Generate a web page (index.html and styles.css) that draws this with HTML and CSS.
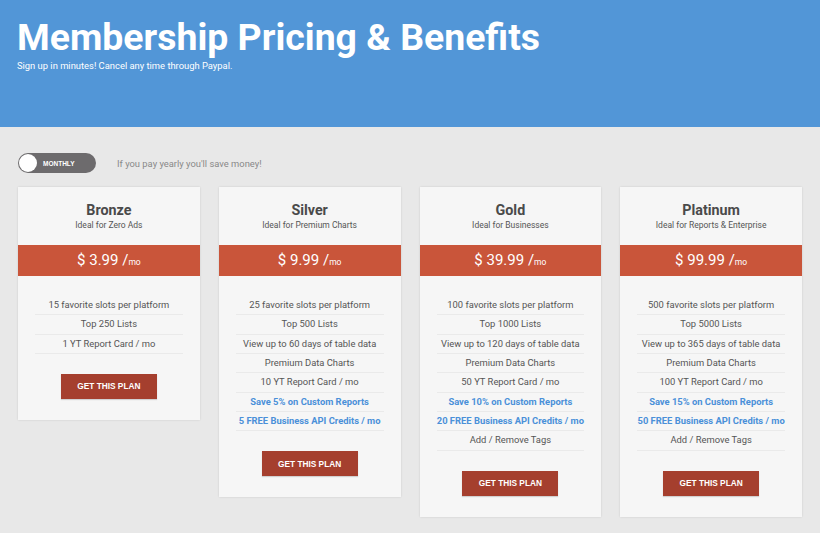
FILE: index.html
```html
<!DOCTYPE html>
<html>
<head>
<meta charset="utf-8">
<link rel="stylesheet" href="styles.css">
</head>
<body>
<header class="hero">
  <h1 class="hero-title">Membership Pricing &amp; Benefits</h1>
  <p class="hero-sub">Sign up in minutes! Cancel any time through Paypal.</p>
</header>
<main class="content">
  <div class="billing">
    <div class="toggle"><span class="knob"></span><span class="toggle-label">MONTHLY</span></div>
    <span class="billing-note">If you pay yearly you'll save money!</span>
  </div>
  <div class="plans">
    <section class="plan">
      <h2 class="plan-name">Bronze</h2>
      <p class="plan-tag">Ideal for Zero Ads</p>
      <div class="price">$ 3.99 /<span class="per">mo</span></div>
      <ul class="features">
        <li>15 favorite slots per platform</li>
        <li>Top 250 Lists</li>
        <li>1 YT Report Card / mo</li>
      </ul>
      <button class="cta">GET THIS PLAN</button>
    </section>
    <section class="plan">
      <h2 class="plan-name">Silver</h2>
      <p class="plan-tag">Ideal for Premium Charts</p>
      <div class="price">$ 9.99 /<span class="per">mo</span></div>
      <ul class="features">
        <li>25 favorite slots per platform</li>
        <li>Top 500 Lists</li>
        <li>View up to 60 days of table data</li>
        <li>Premium Data Charts</li>
        <li>10 YT Report Card / mo</li>
        <li class="hl">Save 5% on Custom Reports</li>
        <li class="hl">5 FREE Business API Credits / mo</li>
      </ul>
      <button class="cta">GET THIS PLAN</button>
    </section>
    <section class="plan">
      <h2 class="plan-name">Gold</h2>
      <p class="plan-tag">Ideal for Businesses</p>
      <div class="price">$ 39.99 /<span class="per">mo</span></div>
      <ul class="features">
        <li>100 favorite slots per platform</li>
        <li>Top 1000 Lists</li>
        <li>View up to 120 days of table data</li>
        <li>Premium Data Charts</li>
        <li>50 YT Report Card / mo</li>
        <li class="hl">Save 10% on Custom Reports</li>
        <li class="hl">20 FREE Business API Credits / mo</li>
        <li>Add / Remove Tags</li>
      </ul>
      <button class="cta">GET THIS PLAN</button>
    </section>
    <section class="plan">
      <h2 class="plan-name">Platinum</h2>
      <p class="plan-tag">Ideal for Reports &amp; Enterprise</p>
      <div class="price">$ 99.99 /<span class="per">mo</span></div>
      <ul class="features">
        <li>500 favorite slots per platform</li>
        <li>Top 5000 Lists</li>
        <li>View up to 365 days of table data</li>
        <li>Premium Data Charts</li>
        <li>100 YT Report Card / mo</li>
        <li class="hl">Save 15% on Custom Reports</li>
        <li class="hl">50 FREE Business API Credits / mo</li>
        <li>Add / Remove Tags</li>
      </ul>
      <button class="cta">GET THIS PLAN</button>
    </section>
  </div>
</main>
</body>
</html>
```
FILE: styles.css
```css
* { box-sizing: border-box; }
html, body { margin: 0; padding: 0; }
body {
  background: #e8e8e8;
  font-family: Roboto, "Liberation Sans", Arial, sans-serif;
  color: #555;
  height: 533px;
  overflow: hidden;
}
.hero {
  background: #5296d7;
  height: 127px;
  padding: 15px 17px 0;
  color: #fff;
}
.hero-title {
  margin: 0;
  font-size: 37.4px;
  line-height: 44px;
  font-weight: 700;
}
.hero-sub {
  margin: 1px 0 0;
  font-size: 9.4px;
  line-height: 12px;
}
.content {
  padding: 26px 18px 0;
}
.billing {
  display: flex;
  align-items: center;
  gap: 21px;
  height: 20px;
}
.toggle {
  position: relative;
  width: 78px;
  height: 20px;
  border-radius: 10px;
  background: #6d6b6d;
  display: flex;
  align-items: center;
}
.knob {
  position: absolute;
  left: 1px;
  top: 1px;
  width: 18px;
  height: 18px;
  border-radius: 50%;
  background: #fff;
}
.toggle-label {
  margin-left: 25px;
  font-family: "Liberation Sans", Arial, sans-serif;
  font-weight: 700;
  font-size: 6.5px;
  color: #fff;
}
.billing-note {
  font-size: 9.4px;
  color: #888;
}
.plans {
  margin-top: 14px;
  display: flex;
  align-items: flex-start;
  gap: 19px;
}
.plan {
  width: 182.5px;
  background: #f6f6f6;
  box-shadow: 0 0 2px rgba(0,0,0,0.12);
  padding: 14px 0 21px;
  display: flex;
  flex-direction: column;
  align-items: center;
}
.plan-name {
  margin: 0;
  font-size: 14.3px;
  line-height: 18px;
  font-weight: 700;
  color: #4a4a4a;
}
.plan-tag {
  margin: 0;
  font-size: 8.5px;
  line-height: 12px;
  color: #555;
}
.price {
  align-self: stretch;
  margin-top: 14px;
  height: 31px;
  background: #c9553a;
  color: #fff;
  font-size: 15px;
  line-height: 31px;
  text-align: center;
}
.per {
  font-size: 8.5px;
}
.features {
  list-style: none;
  margin: 20px 17px 0;
  padding: 0;
  align-self: stretch;
}
.features li {
  font-size: 9.4px;
  line-height: 18.33px;
  padding-top: 1px;
  margin-top: -1px;
  border-bottom: 1px solid #eaeaea;
  text-align: center;
  color: #555;
  white-space: nowrap;
}
.features li:first-child { margin-top: 0; padding-top: 0; }
.features li.hl {
  color: #4a90d9;
  font-weight: 700;
}
.cta {
  margin-top: 20px;
  width: 96px;
  height: 25px;
  border: none;
  background: #a53f2e;
  color: #fff;
  font-family: "Liberation Sans", Arial, sans-serif;
  font-weight: 700;
  font-size: 8.3px;
  box-shadow: 0 1px 1px rgba(0,0,0,0.15);
  padding: 0;
}
```
